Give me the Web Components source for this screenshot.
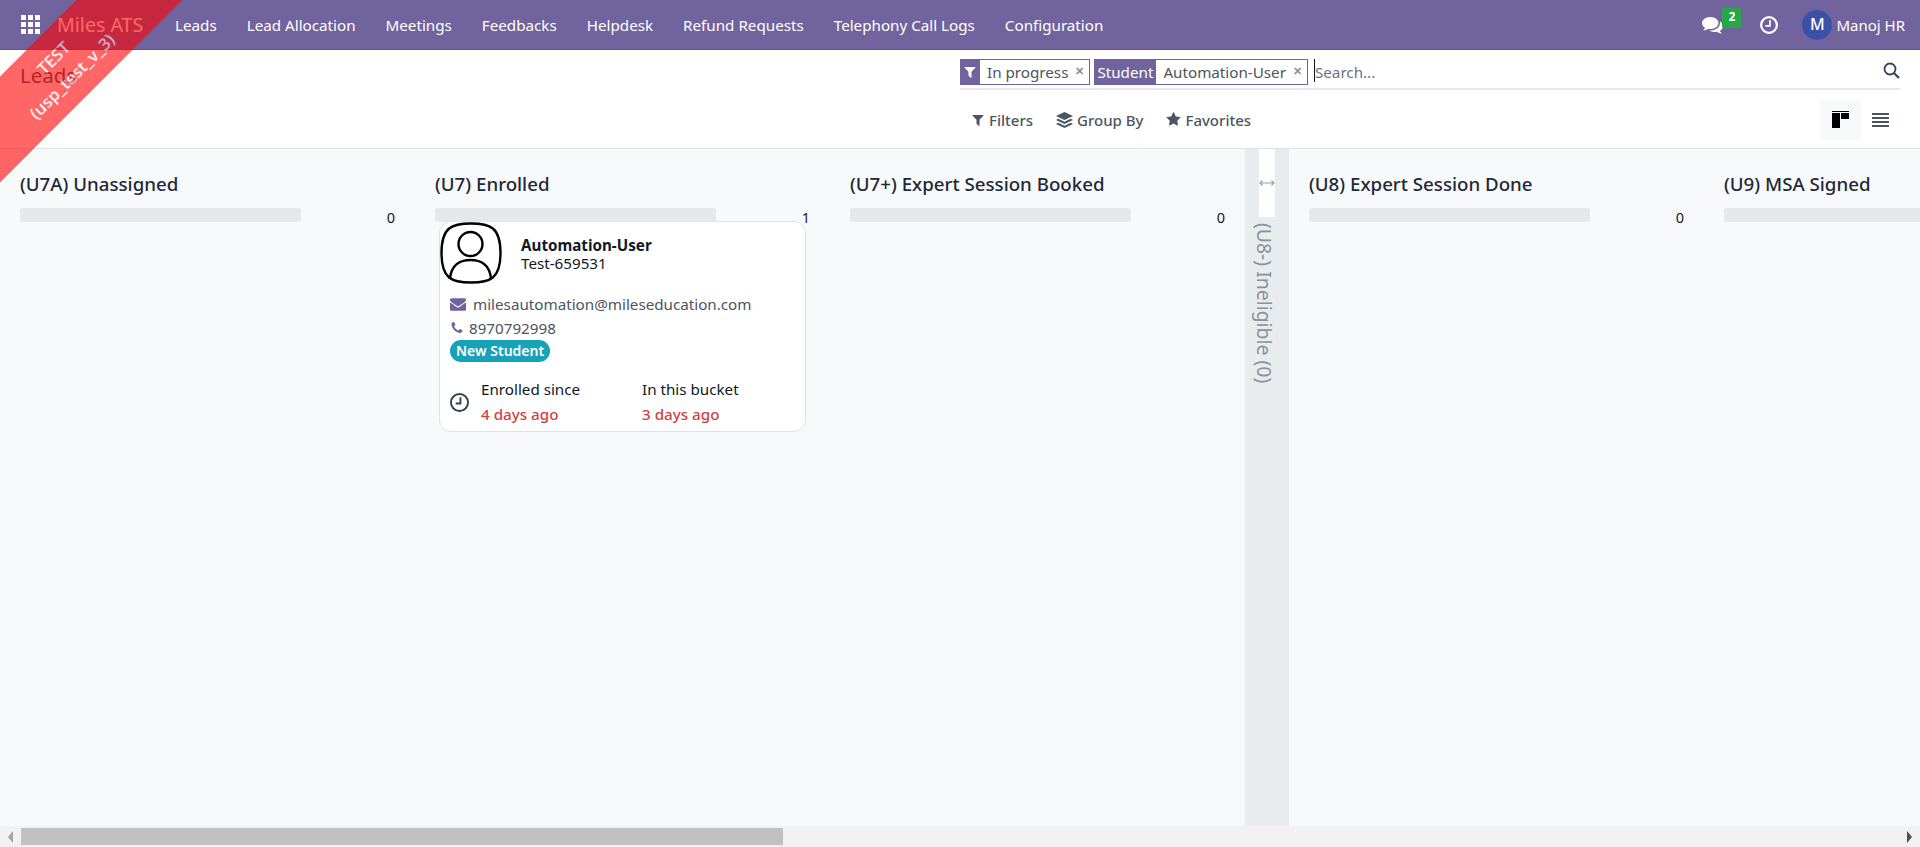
<!DOCTYPE html>
<html lang="en">
<head>
<meta charset="utf-8">
<title>Leads</title>
<style>
  html, body { margin: 0; height: 100%; overflow: hidden; }
  body { font-family: "Noto Sans", "Open Sans", sans-serif; font-size: 15.2px; color: #374151; background: #fff; }
  ats-shell { height: 100vh; }
</style>
</head>
<body>
<ats-shell>
  <ats-navbar slot="top"></ats-navbar>
  <ats-control-panel slot="top"></ats-control-panel>
  <kanban-board>
    <kanban-column title="(U7A) Unassigned" count="0" gap="40"></kanban-column>
    <kanban-column title="(U7) Enrolled" count="1" gap="40">
      <lead-card name="Automation-User" code="Test-659531" email="milesautomation@mileseducation.com"
        phone="8970792998" tag="New Student" since="4 days ago" bucket="3 days ago"></lead-card>
    </kanban-column>
    <kanban-column title="(U7+) Expert Session Booked" count="0" gap="20"></kanban-column>
    <folded-column title="(U8-) Ineligible (0)"></folded-column>
    <kanban-column title="(U8) Expert Session Done" count="0" gap="40"></kanban-column>
    <kanban-column title="(U9) MSA Signed" gap="40"></kanban-column>
  </kanban-board>
  <fake-scrollbar></fake-scrollbar>
</ats-shell>
<test-ribbon></test-ribbon>

<script>
const ICONS = {
    envelope: 'M1792 710v794q0 66-47 113t-113 47h-1472q-66 0-113-47t-47-113v-794q44 49 101 87 362 246 497 345 57 42 92.5 65.5t94.5 48 110 24.5h2q51 0 110-24.5t94.5-48 92.5-65.5q170-123 498-345 57-39 100-87zm0-294q0 79-49 151t-122 123q-376 261-468 325-10 7-42.500 30.500t-54 38-52 32.500-57.500 27-50 9h-2q-23 0-50-9t-57.500-27-52-32.500-54-38-42.500-30.500q-91-64-262-182.500t-205-142.500q-62-42-117-115.500t-55-136.500q0-78 41.500-130t118.500-52h1472q65 0 112.500 47t47.500 113z',
    phone: 'M1600 1240q0 27-10 70.500t-21 68.500q-21 50-122 106-94 51-186 51-27 0-53-3.500t-57.500-12.500-47-14.500-55.500-20.500-49-18q-98-35-175-83-127-79-264-216t-216-264q-48-77-83-175-3-9-18-49t-20.500-55.500-14.500-47-12.500-57.500-3.500-53q0-92 51-186 56-101 106-122 25-11 68.500-21t70.500-10q14 0 21 3 18 6 53 76 11 19 30 54t35 63.500 31 53.500q3 4 17.500 25t21.500 35.500 7 28.500q0 20-28.500 50t-62 55-62 53-28.500 46q0 9 5 22.500t8.500 20.500 14 24 11.500 19q76 137 174 235t235 174q2 1 19 11.500t24 14 20.500 8.500 22.500 5q18 0 46-28.500t53-62 55-62 50-28.500q14 0 28.500 7t35.500 21.500 25 17.500q25 15 53.500 31t63.500 35 54 30q70 35 76 53 3 7 3 21z',
    filter: 'M1595 295q17 41-14 70l-493 493v742q0 42-39 59-13 5-25 5-27 0-45-19l-256-256q-19-19-19-45v-486l-493-493q-31-29-14-70 17-39 59-39h1280q42 0 59 39z',
    star: 'M1728 647q0 22-26 48l-363 354 86 500q1 7 1 20 0 21-10.500 35.500t-30.500 14.500q-19 0-40-12l-449-236-449 236q-22 12-40 12-21 0-31.500-14.500t-10.500-35.500q0-6 2-20l86-500-364-354q-25-27-25-48 0-37 56-46l502-73 225-455q19-41 49-41t49 41l225 455 502 73q56 9 56 46z',
    comments: 'M1408 768q0 139-94 257t-256.500 186.500-353.500 68.500q-86 0-176-16-124 88-278 128-36 9-86 16h-3q-11 0-20.500-8t-11.500-21q-1-3-1-6.500t.5-6.500 2-6l2.500-5 3.500-5.500 4-5 4.500-5 4-4.500q5-6 23-25t26-29.500 22.500-29 25-38.500 20.500-44q-124-72-195-177t-71-224q0-139 94-257t256.500-186.500 353.500-68.500 353.500 68.500 256.500 186.500 94 257zm384 256q0 120-71 224.500t-195 176.500q10 24 20.500 44t25 38.500 22.500 29 26 29.500 23 25q1 1 4 4.500t4.500 5 4 5 3.500 5.500l2.500 5 2 6 .5 6.500-1 6.500q-3 14-13 22t-22 7q-50-7-86-16-154-40-278-128-90 16-176 16-271 0-472-132 58 4 88 4 161 0 309-45t264-129q125-92 192-212t67-254q0-77-23-152 129 71 204 178t75 230z'
};

function icon(name, size, color) {
    return `<svg width="${size}" height="${size}" viewBox="0 0 1792 1792" fill="${color}" style="display:block;flex:none"><path d="${ICONS[name]}"/></svg>`;
}

function clockIcon(size, color, sw) {
    return `<svg width="${size}" height="${size}" viewBox="0 0 20 20" fill="none" stroke="${color}" stroke-width="${sw}" style="display:block;flex:none"><circle cx="10" cy="10" r="${10 - sw / 2}"/><path d="M11 4.500V11H6" stroke-width="2"/></svg>`;
}

class AtsShell extends HTMLElement {
    constructor() {
        super();
        this.attachShadow({ mode: 'open' });
        this.shadowRoot.innerHTML = `
      <style>
        :host { display: flex; flex-direction: column; }
        ::slotted(kanban-board) { flex: 1; min-height: 0; }
      </style>
      <slot name="top"></slot>
      <slot></slot>
    `;
    }
}

class AtsNavbar extends HTMLElement {
    constructor() {
        super();
        this.attachShadow({ mode: 'open' });
    }

    connectedCallback() {
        const items = ['Leads', 'Lead Allocation', 'Meetings', 'Feedbacks', 'Helpdesk', 'Refund Requests', 'Telephony Call Logs', 'Configuration'];
        this.shadowRoot.innerHTML = `
      <style>
        :host {
          display: flex; align-items: center; height: 50px; box-sizing: border-box;
          background: #71639e; border-bottom: 1px solid #5f5387; color: #fff;
          font-size: 15.200px; padding-left: 21px;
        }
        .apps { display: grid; grid-template-columns: repeat(3, 5px); grid-auto-rows: 5px; gap: 2px; width: 19px; }
        .apps i { background: #fff; }
        .brand { font-size: 19.600px; margin-left: 17px; width: 118px; white-space: nowrap; }
        nav { display: flex; gap: 30px; }
        nav span { white-space: nowrap; }
        .right { margin-left: auto; display: flex; align-items: center; padding-right: 15px; }
        .chat { position: relative; width: 21px; margin-right: 37px; }
        .badge {
          position: absolute; left: 20px; top: -6px; width: 19px; height: 20px; border-radius: 2px;
          background: #28a745; font-size: 12px; font-weight: 700; text-align: center; line-height: 18px;
        }
        .avatar {
          width: 30px; height: 30px; border-radius: 50%; background: #3a51a8; margin-left: 24px;
          text-align: center; line-height: 29px; font-size: 16px; font-weight: 500;
        }
        .user { margin-left: 4px; white-space: nowrap; font-size: 15px; }
      </style>
      <div class="apps">${'<i></i>'.repeat(9)}</div>
      <div class="brand">Miles ATS</div>
      <nav>${items.map((label) => `<span>${label}</span>`).join('')}</nav>
      <div class="right">
        <div class="chat">${icon('comments', 21, '#fff')}<div class="badge">2</div></div>
        ${clockIcon(18, '#fff', 2.500)}
        <div class="avatar">M</div>
        <div class="user">Manoj HR</div>
      </div>
    `;
    }
}

class SearchFacet extends HTMLElement {
    constructor() {
        super();
        this.attachShadow({ mode: 'open' });
        this.shadowRoot.innerHTML = `
      <style>
        :host {
          display: inline-flex; height: 26px; box-sizing: border-box; border: 1px solid #71639e;
          align-items: stretch; font-size: 15.200px; color: #4b5563; white-space: nowrap; background: #fff;
        }
        .label {
          background: #71639e; color: #fff; display: flex; align-items: center; padding: 0 3px;
          margin: -1px 0 -1px -1px;
        }
        .value { display: flex; align-items: center; padding: 0 5px 0 7px; }
        .x { font-size: 11px; color: #8a8f98; margin-left: 7px; font-weight: 700; line-height: 1; position: relative; top: -2px; }
      </style>
      <div class="label"><slot name="label"></slot></div>
      <div class="value"><slot></slot><span class="x">✕</span></div>
    `;
    }
}

class AtsControlPanel extends HTMLElement {
    constructor() {
        super();
        this.attachShadow({ mode: 'open' });
    }

    connectedCallback() {
        const layers = `<svg width="17" height="16" viewBox="0 0 17 16" fill="#4b5563" style="display:block;flex:none">
          <path d="M8.500 0 17 4 8.500 8 0 4z"/>
          <path d="M2.200 6.700 8.500 9.700l6.300-3L17 8l-8.500 4L0 8z"/>
          <path d="M2.200 10.700l6.300 3 6.300-3L17 12l-8.500 4L0 12z"/>
        </svg>`;
        this.shadowRoot.innerHTML = `
      <style>
        :host {
          display: flex; height: 99px; box-sizing: border-box; border-bottom: 1px solid #dee2e6;
          padding: 0 20px; background: #fff;
        }
        .left { width: 940px; font-size: 20.500px; padding-top: 11px; color: #4b5563; }
        .left span { line-height: 28px; display: block; }
        .right { flex: 1; padding-top: 9px; min-width: 0; }
        .search {
          display: flex; align-items: flex-start; gap: 4px; height: 31px; box-sizing: border-box;
          border-bottom: 2px solid #e5e7eb;
        }
        .ph { border-left: 1px solid #111; height: 23px; margin-left: 2px; line-height: 26px; color: #6b7280; font-size: 15.200px; }
        .glass { margin-left: auto; margin-top: 3px; }
        .tools { display: flex; align-items: center; margin-top: 9px; height: 41px; }
        .btn { display: flex; align-items: center; gap: 4px; padding: 0 11px; font-weight: 500; font-size: 15px; color: #4b5563; white-space: nowrap; }
        .btn + .btn { padding-left: 12px; }
        .views { margin-left: auto; display: flex; }
        .view { width: 39px; height: 41px; display: flex; align-items: center; justify-content: center; border-radius: 3px; }
        .view.active { width: 41px; background: #f8f9fa; }
      </style>
      <div class="left"><span>Leads</span></div>
      <div class="right">
        <div class="search">
          <search-facet><svg slot="label" width="14" height="14" viewBox="0 0 1792 1792" fill="#fff" style="display:block"><path d="${ICONS.filter}"/></svg>In progress</search-facet>
          <search-facet><span slot="label">Student</span>Automation-User</search-facet>
          <div class="ph">Search...</div>
          <svg class="glass" width="17" height="17" viewBox="0 0 17 17" fill="none" stroke="#374151" stroke-width="1.800"><circle cx="7" cy="7" r="5.500"/><path d="M11 11l5 5" stroke-width="2.200"/></svg>
        </div>
        <div class="tools">
          <div class="btn">${icon('filter', 14, '#4b5563')}Filters</div>
          <div class="btn">${layers}Group By</div>
          <div class="btn">${icon('star', 15, '#4b5563')}Favorites</div>
          <div class="views">
            <div class="view active">
              <svg width="17" height="17" viewBox="0 0 17 17"><path d="M0 0h17v1H0z" fill="#000"/><path d="M0 2h8v15H0zM9 2h8v6H9z" fill="#000"/></svg>
            </div>
            <div class="view">
              <svg width="17" height="15" viewBox="0 0 17 15" fill="#4b5563"><path d="M0 1h17v2H0zM0 5h17v2H0zM0 9h17v2H0zM0 13h17v2H0z"/></svg>
            </div>
          </div>
        </div>
      </div>
    `;
    }
}

class KanbanBoard extends HTMLElement {
    constructor() {
        super();
        this.attachShadow({ mode: 'open' });
        this.shadowRoot.innerHTML = `
      <style>
        :host { display: flex; background: #f8f9fa; padding-left: 20px; overflow: hidden; min-width: 0; }
      </style>
      <slot></slot>
    `;
    }
}

class KanbanColumn extends HTMLElement {
    constructor() {
        super();
        this.attachShadow({ mode: 'open' });
    }

    connectedCallback() {
        const count = this.getAttribute('count');
        this.shadowRoot.innerHTML = `
      <style>
        :host { display: block; flex: 0 0 375px; margin-right: ${this.getAttribute('gap')}px; padding-top: 23px; box-sizing: border-box; }
        h2 { margin: 0; font-size: 18.700px; font-weight: 500; line-height: 24px; color: #1f2937; white-space: nowrap; }
        .progress { display: flex; justify-content: space-between; height: 13px; margin-top: 12px; }
        .bar { width: 281px; height: 14px; background: #e5e7eb; border-radius: 3px; }
        .count { font-size: 14.500px; line-height: 18px; color: #111827; }
        .cards { padding: 0 4px; }
      </style>
      <h2>${this.getAttribute('title')}</h2>
      <div class="progress"><div class="bar"></div>${count === null ? '' : `<div class="count">${count}</div>`}</div>
      <div class="cards"><slot></slot></div>
    `;
    }
}

class FoldedColumn extends HTMLElement {
    constructor() {
        super();
        this.attachShadow({ mode: 'open' });
    }

    connectedCallback() {
        this.shadowRoot.innerHTML = `
      <style>
        :host {
          display: flex; flex-direction: column; align-items: flex-start; flex: 0 0 44px; margin-right: 20px;
          background: #e9ecef; box-sizing: border-box; padding-left: 10px;
        }
        .toggle { margin-left: 4px; width: 16px; height: 68px; background: #fff; display: flex; align-items: center; justify-content: center; }
        .name { writing-mode: vertical-rl; margin: 6px 0 0 1px; font-size: 19.400px; line-height: 16px; color: #8b9199; white-space: nowrap; }
      </style>
      <div class="toggle">
        <svg width="16" height="8" viewBox="0 0 16 8" fill="none" stroke="#9aa0a6" stroke-width="1.200"><path d="M1 4h14M3.500 1.500 1 4l2.500 2.500M12.500 1.500 15 4l-2.500 2.500"/></svg>
      </div>
      <div class="name">${this.getAttribute('title')}</div>
    `;
    }
}

class LeadCard extends HTMLElement {
    constructor() {
        super();
        this.attachShadow({ mode: 'open' });
    }

    connectedCallback() {
        const a = (k) => this.getAttribute(k);
        this.shadowRoot.innerHTML = `
      <style>
        :host {
          display: block; height: 211px; box-sizing: border-box; background: #fff;
          border: 1px solid #dee2e6; border-radius: 12px; font-size: 15.200px; color: #111827;
        }
        .head { display: flex; align-items: center; gap: 19px; height: 62px; }
        .who { padding-top: 1px; }
        .name { font-weight: 700; line-height: 18px; }
        .code { line-height: 18px; }
        .contact { display: flex; align-items: center; padding-left: 10px; color: #4b5563; line-height: 20px; }
        .mail { margin-top: 10px; gap: 7px; }
        .tel { margin-top: 4px; gap: 5px; }
        .tag {
          display: inline-block; margin: 2px 0 0 10px; height: 22px; line-height: 21px; padding: 0 6px; border-radius: 11px;
          background: #17a2b8; color: #fff; font-weight: 600; font-size: 14px;
        }
        .foot { display: flex; align-items: center; padding-left: 10px; margin-top: 15px; }
        .times { display: flex; margin-left: 12px; }
        .t { width: 161px; line-height: 25px; }
        .t b { display: block; font-weight: 500; color: #d0413f; }
      </style>
      <div class="head">
        <svg width="62" height="62" viewBox="0 0 62 62" fill="none" stroke="#000" stroke-width="2.400">
          <path d="M31 1.500C50 1.500 60.500 5 60.500 31S50 60.500 31 60.500 1.500 57 1.500 31 12 1.500 31 1.500z"/>
          <circle cx="30.500" cy="22" r="12"/>
          <path d="M10 57C11 43 20 38 30.500 38S50 43 51 57"/>
        </svg>
        <div class="who"><div class="name">${a('name')}</div><div class="code">${a('code')}</div></div>
      </div>
      <div class="contact mail">${icon('envelope', 16, '#71639e')}<span>${a('email')}</span></div>
      <div class="contact tel">${icon('phone', 14, '#71639e')}<span>${a('phone')}</span></div>
      <span class="tag">${a('tag')}</span>
      <div class="foot">
        ${clockIcon(19, '#374151', 2)}
        <div class="times">
          <div class="t">Enrolled since<b>${a('since')}</b></div>
          <div class="t">In this bucket<b>${a('bucket')}</b></div>
        </div>
      </div>
    `;
    }
}

class FakeScrollbar extends HTMLElement {
    constructor() {
        super();
        this.attachShadow({ mode: 'open' });
        this.shadowRoot.innerHTML = `
      <style>
        :host { display: flex; align-items: center; height: 21px; flex: none; background: #f1f1f1; }
        .arrow { flex: 0 0 21px; display: flex; justify-content: center; }
        .left { border: 6px solid transparent; border-left: 0; border-right: 5px solid #a3a3a3; }
        .right { border: 6px solid transparent; border-right: 0; border-left: 5px solid #505050; }
        .thumb { width: 762px; height: 17px; background: #c1c1c1; }
        .track { flex: 1; }
      </style>
      <div class="arrow"><div class="left"></div></div>
      <div class="thumb"></div>
      <div class="track"></div>
      <div class="arrow"><div class="right"></div></div>
    `;
    }
}

class TestRibbon extends HTMLElement {
    constructor() {
        super();
        this.attachShadow({ mode: 'open' });
        this.shadowRoot.innerHTML = `
      <style>
        :host {
          position: fixed; left: -85px; top: 27px; width: 300px; height: 75px; transform: rotate(-45deg);
          background: #ff0000; opacity: .6; color: #fff; text-align: center; font-size: 17px;
          font-weight: 500; line-height: 26px; box-sizing: border-box; padding: 12px 7px 0 0; pointer-events: none;
        }
      </style>
      <div>TEST</div>
      <div>(usp_test_v_3)</div>
    `;
    }
}

customElements.define('ats-shell', AtsShell);
customElements.define('ats-navbar', AtsNavbar);
customElements.define('search-facet', SearchFacet);
customElements.define('ats-control-panel', AtsControlPanel);
customElements.define('kanban-board', KanbanBoard);
customElements.define('kanban-column', KanbanColumn);
customElements.define('folded-column', FoldedColumn);
customElements.define('lead-card', LeadCard);
customElements.define('fake-scrollbar', FakeScrollbar);
customElements.define('test-ribbon', TestRibbon);
</script>
</body>
</html>
